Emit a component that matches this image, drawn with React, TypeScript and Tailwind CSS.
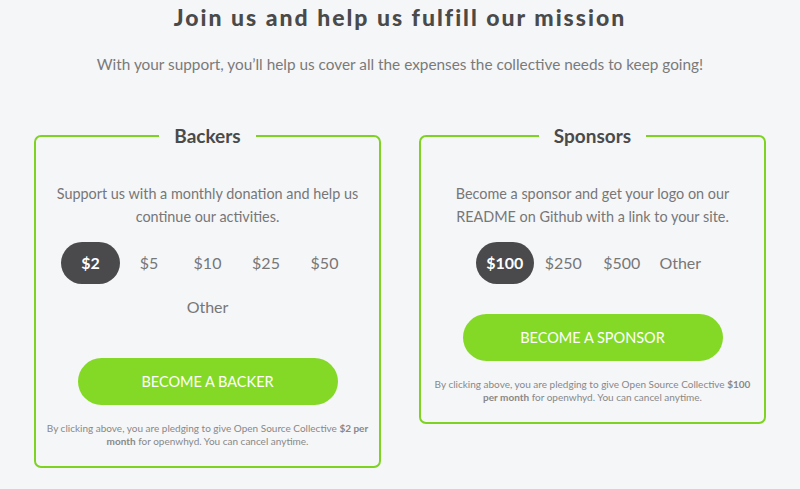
import React from "react";

const lato = { fontFamily: '"Lato", "Liberation Sans", sans-serif' };

function Amounts({ items, active }: { items: string[]; active: string }) {
  return (
    <div className="mx-auto flex w-[293px] flex-wrap justify-center gap-y-[2px]">
      {items.map((a) => (
        <div
          key={a}
          className={
            "flex h-[42px] w-[58.5px] items-center justify-center rounded-full text-[16px] " +
            (a === active ? "bg-[#4a4a4c] font-bold text-white" : "text-[#777777]")
          }
        >
          {a}
        </div>
      ))}
    </div>
  );
}

function Card({
  title,
  text,
  amounts,
  active,
  button,
  pledge,
}: {
  title: string;
  text: string;
  amounts: string[];
  active: string;
  button: string;
  pledge: React.ReactNode;
}) {
  return (
    <fieldset className="w-[347px] rounded-[7px] border-2 border-[#7ed321] px-[10px] pb-[18px]">
      <legend className="mx-auto px-[15px] text-[19px] font-bold leading-[24px] text-[#4a4a4a]">
        {title}
      </legend>
      <p className="mx-auto mt-[34px] w-[310px] text-center text-[14.4px] leading-[23px] text-[#777777]">
        {text}
      </p>
      <div className="mt-[14px]">
        <Amounts items={amounts} active={active} />
      </div>
      <div className="mt-[30px] flex justify-center">
        <div className="flex h-[47px] w-[260px] items-center justify-center rounded-full bg-[#83d925] text-[14.5px] uppercase text-white">
          {button}
        </div>
      </div>
      <p className="mt-[17px] text-center text-[10px] leading-[13px] text-[#888888]">{pledge}</p>
    </fieldset>
  );
}

export default function App() {
  return (
    <div className="min-h-[489px] w-full bg-[#f5f6f8]" style={lato}>
      <h1 className="pt-[2px] text-center text-[23px] font-black leading-[30px] tracking-[2px] text-[#4a4a4a]">
        Join us and help us fulfill our mission
      </h1>
      <p className="mt-[21px] text-center text-[15.35px] leading-[22px] text-[#7a7a7a]">
        With your support, you’ll help us cover all the expenses the collective needs to keep going!
      </p>
      <div className="mt-[49px] flex items-start justify-center gap-[38px]">
        <Card
          title="Backers"
          text="Support us with a monthly donation and help us continue our activities."
          amounts={["$2", "$5", "$10", "$25", "$50", "Other"]}
          active="$2"
          button="Become a backer"
          pledge={
            <>
              By clicking above, you are pledging to give Open Source Collective{" "}
              <b className="font-bold">$2 per month</b> for openwhyd. You can cancel anytime.
            </>
          }
        />
        <Card
          title="Sponsors"
          text="Become a sponsor and get your logo on our README on Github with a link to your site."
          amounts={["$100", "$250", "$500", "Other"]}
          active="$100"
          button="Become a sponsor"
          pledge={
            <>
              By clicking above, you are pledging to give Open Source Collective{" "}
              <b className="font-bold">$100 per month</b> for openwhyd. You can cancel anytime.
            </>
          }
        />
      </div>
    </div>
  );
}
